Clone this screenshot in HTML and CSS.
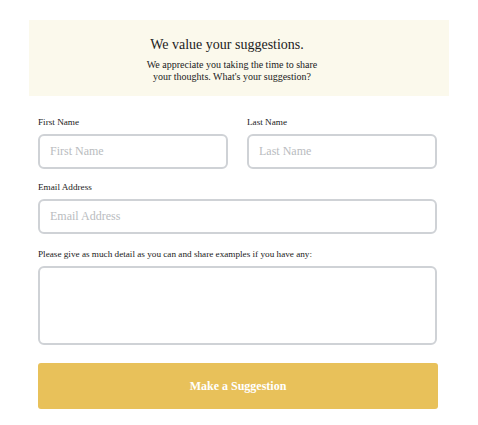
FILE: index.html
```html
<!DOCTYPE html>
<html>
<head>
<meta charset="utf-8">
<link rel="stylesheet" href="styles.css">
</head>
<body>
<div class="wrap">
  <div class="hero">
    <h1 class="title">We value your suggestions.</h1>
    <p class="sub">We appreciate you taking the time to share your thoughts. What's your suggestion?</p>
  </div>
  <form class="form">
    <div class="names">
      <div class="field">
        <label class="label">First Name</label>
        <input class="input" type="text" placeholder="First Name">
      </div>
      <div class="field">
        <label class="label">Last Name</label>
        <input class="input" type="text" placeholder="Last Name">
      </div>
    </div>
    <div class="field field-email">
      <label class="label">Email Address</label>
      <input class="input" type="text" placeholder="Email Address">
    </div>
    <div class="field field-area">
      <label class="label">Please give as much detail as you can and share examples if you have any:</label>
      <textarea class="area"></textarea>
    </div>
    <button class="btn" type="button">Make a Suggestion</button>
  </form>
</div>
</body>
</html>
```
FILE: styles.css
```css
* { box-sizing: border-box; }
html, body { margin: 0; padding: 0; background: #fff; }
body { font-family: "Liberation Serif", "Times New Roman", serif; color: #222; }
.wrap { width: 420px; margin: 20px 0 0 29px; }
.hero {
  background: #fbf9ec;
  padding: 17px 14px 13px 0;
  text-align: center;
  display: flex;
  flex-direction: column;
  align-items: center;
}
.title { margin: 0; font-size: 14px; font-weight: normal; line-height: 16px; padding-right: 10px; color: #222; }
.sub { margin: 6px 0 0; font-size: 10px; line-height: 12px; max-width: 180px; color: #222; }
.form { padding: 21px 11px 0 9px; display: flex; flex-direction: column; }
.names { display: grid; grid-template-columns: 190px 190px; column-gap: 19px; }
.field { display: flex; flex-direction: column; margin-bottom: 13px; }
.field-email { margin-bottom: 15px; }
.field-area { margin-bottom: 0; }
.label { font-size: 9.2px; line-height: 10px; margin-bottom: 7px; color: #222; }
.input {
  height: 35px;
  border: 2px solid #cfd2d6;
  border-radius: 6px;
  padding: 0 10px;
  font-family: "Liberation Serif", "Times New Roman", serif;
  font-size: 12px;
  color: #333;
  background: #fff;
  outline: none;
}
.field-email .input { margin-right: 1px; }
.input::placeholder { color: #b9bcc0; }
.area {
  height: 79px;
  margin-right: 1px;
  border: 2px solid #cfd2d6;
  border-radius: 6px;
  resize: none;
  background: #fff;
  outline: none;
}
.btn {
  margin-top: 18px;
  height: 46px;
  width: 100%;
  background: #e8c15a;
  border: none;
  border-radius: 3px;
  color: #fff;
  font-family: "Liberation Serif", "Times New Roman", serif;
  font-size: 12px;
  font-weight: bold;
}
```
